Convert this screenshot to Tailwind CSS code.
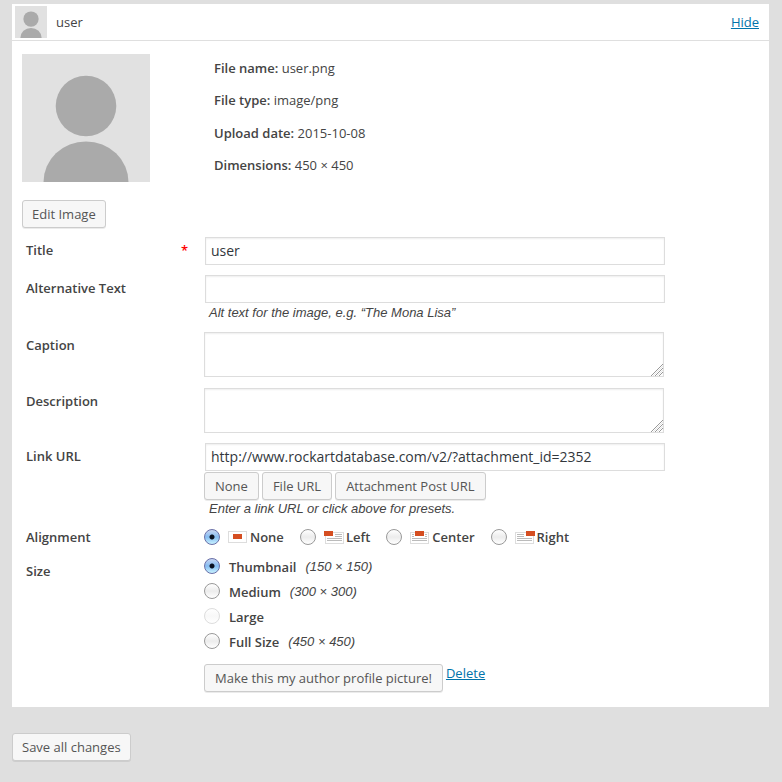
<!DOCTYPE html>
<html lang="en">
<head>
<meta charset="utf-8">
<meta name="viewport" content="width=device-width, initial-scale=1">
<title>Media upload</title>
<script src="https://cdn.jsdelivr.net/npm/@tailwindcss/browser@4"></script>
</head>
<body class="min-h-screen bg-[#dfdfdf] pt-1 pl-3 pr-[13px] pb-5 font-['Open_Sans','Noto_Sans',sans-serif] text-[13px] leading-[18px] text-[#444]">
<form>
  <main class="bg-white pb-[15px]">
    <header class="flex h-[37px] items-center border-b border-[#dfdfdf] pl-[3px] pr-[10px]">
      <svg class="size-8 shrink-0" viewBox="0 0 128 128" aria-hidden="true"><rect width="128" height="128" fill="#e1e1e1"/><circle cx="64" cy="52" r="30.500" fill="#aaa"/><path d="M21.500 128a42.500 40.500 0 0 1 85 0z" fill="#aaa"/></svg>
      <span class="ml-[9px] grow">user</span>
      <a href="#" class="text-[#0073aa] underline">Hide</a>
    </header>

    <section class="px-[10px] pt-[13px]">
      <div class="flex">
        <svg class="size-32 shrink-0" viewBox="0 0 128 128" role="img" aria-label="user"><rect width="128" height="128" fill="#e1e1e1"/><circle cx="64" cy="52" r="30.300" fill="#aaa"/><path d="M21.500 128a42.500 40.500 0 0 1 85 0z" fill="#aaa"/></svg>
        <div class="ml-16 flex flex-col justify-between pt-[5px] pb-2">
          <p><strong class="font-semibold">File name:</strong> user.png</p>
          <p><strong class="font-semibold">File type:</strong> image/png</p>
          <p><strong class="font-semibold">Upload date:</strong> 2015-10-08</p>
          <p><strong class="font-semibold">Dimensions:</strong> 450 × 450</p>
        </div>
      </div>
      <button type="button" class="mt-[18px] block h-7 rounded-[3px] border border-[#ccc] bg-[#f7f7f7] px-[9px] text-[#555] shadow-[0_1px_0_rgba(0,0,0,0.08)]">Edit Image</button>
    </section>

    <section class="mt-[9px] flex flex-col gap-[10px] pl-[14px] pr-[104px]">
      <div class="flex items-start">
        <label for="title" class="flex w-[178px] shrink-0 justify-between pr-4 pt-1 font-semibold">Title <span class="text-[#f00]">*</span></label>
        <div class="grow pl-px">
          <input id="title" type="text" value="user" required class="block h-7 w-full border border-[#ddd] bg-white px-[5px] pb-px text-sm text-[#32373c] shadow-[inset_0_1px_2px_rgba(0,0,0,0.07)]">
        </div>
      </div>

      <div class="flex items-start">
        <label for="alt" class="w-[178px] shrink-0 pt-1 font-semibold">Alternative Text</label>
        <div class="grow pl-px">
          <input id="alt" type="text" class="block h-7 w-full border border-[#ddd] bg-white px-[5px] text-sm shadow-[inset_0_1px_2px_rgba(0,0,0,0.07)]">
          <p class="pt-px pl-1 font-['Liberation_Sans',sans-serif] italic">Alt text for the image, e.g. “The Mona Lisa”</p>
        </div>
      </div>

      <div class="flex items-start pb-px">
        <label for="caption" class="w-[178px] shrink-0 pt-1 font-semibold">Caption</label>
        <div class="relative mr-px grow">
          <textarea id="caption" class="block h-[45px] w-full resize-none border border-[#ddd] bg-white px-[5px] text-sm shadow-[inset_0_1px_2px_rgba(0,0,0,0.07)]"></textarea>
          <svg class="pointer-events-none absolute right-px bottom-px size-3" viewBox="0 0 12 12" fill="none" stroke="#999" aria-hidden="true"><path d="M0 12 12 0M4 12l8-8M8 12l4-4"/><path d="M2 12l10-10M6 12l6-6" stroke="#e4e4e4"/></svg>
        </div>
      </div>

      <div class="flex items-start">
        <label for="description" class="w-[178px] shrink-0 pt-1 font-semibold">Description</label>
        <div class="relative mr-px grow">
          <textarea id="description" class="block h-[45px] w-full resize-none border border-[#ddd] bg-white px-[5px] text-sm shadow-[inset_0_1px_2px_rgba(0,0,0,0.07)]"></textarea>
          <svg class="pointer-events-none absolute right-px bottom-px size-3" viewBox="0 0 12 12" fill="none" stroke="#999" aria-hidden="true"><path d="M0 12 12 0M4 12l8-8M8 12l4-4"/><path d="M2 12l10-10M6 12l6-6" stroke="#e4e4e4"/></svg>
        </div>
      </div>

      <div class="flex items-start">
        <label for="url" class="w-[178px] shrink-0 pt-1 font-semibold">Link URL</label>
        <div class="grow">
          <div class="pl-px"><input id="url" type="text" value="http://www.rockartdatabase.com/v2/?attachment_id=2352" class="block h-7 w-full border border-[#ddd] bg-white px-[5px] pb-px text-sm text-[#32373c] shadow-[inset_0_1px_2px_rgba(0,0,0,0.07)]"></div>
          <div class="flex gap-[3px] pt-px">
            <button type="button" class="h-7 rounded-[3px] border border-[#ccc] bg-[#f7f7f7] px-[10px] text-[#555] shadow-[0_1px_0_rgba(0,0,0,0.08)]">None</button>
            <button type="button" class="h-7 rounded-[3px] border border-[#ccc] bg-[#f7f7f7] px-[10px] text-[#555] shadow-[0_1px_0_rgba(0,0,0,0.08)]">File URL</button>
            <button type="button" class="h-7 rounded-[3px] border border-[#ccc] bg-[#f7f7f7] px-[10px] text-[#555] shadow-[0_1px_0_rgba(0,0,0,0.08)]">Attachment Post URL</button>
          </div>
          <p class="pl-[5px] font-['Liberation_Sans',sans-serif] italic">Enter a link URL or click above for presets.</p>
        </div>
      </div>

      <fieldset class="flex h-4 items-center">
        <legend class="float-left w-[178px] shrink-0 font-semibold">Alignment</legend>
        <div class="flex items-center gap-4">
          <label class="flex items-center font-semibold"><input type="radio" name="align" checked class="mr-2 size-4 shrink-0 appearance-none rounded-full border border-[#999] bg-linear-to-b from-white via-[#ececec] to-white checked:border-[#6a70a8] checked:bg-[radial-gradient(circle_at_50%_50%,#0a1020_2px,transparent_3px),linear-gradient(#c9d6f2,#86bdf2_50%,#c8f2ff)]"><svg class="mr-[3px] h-[14px] w-[19px]" viewBox="0 0 19 14" aria-hidden="true"><rect x=".5" y="1.500" width="18" height="11" fill="#fff" stroke="#ddd"/><rect x="5" y="4" width="9" height="5" fill="#d54e21"/></svg>None</label>
          <label class="flex items-center font-semibold"><input type="radio" name="align" class="mr-2 size-4 shrink-0 appearance-none rounded-full border border-[#999] bg-linear-to-b from-white via-[#ececec] to-white checked:border-[#6a70a8] checked:bg-[radial-gradient(circle_at_50%_50%,#0a1020_2px,transparent_3px),linear-gradient(#c9d6f2,#86bdf2_50%,#c8f2ff)]"><svg class="mr-[2px] h-[14px] w-5" viewBox="0 0 20 14" aria-hidden="true"><rect x="1.500" y="2.500" width="18" height="11" fill="#fff" stroke="#ddd"/><path d="M11 4.500h7M11 6.500h7M3 8.500h15M3 10.500h15" stroke="#bbb"/><rect y="1" width="9" height="5" fill="#d54e21"/></svg>Left</label>
          <label class="flex items-center font-semibold"><input type="radio" name="align" class="mr-2 size-4 shrink-0 appearance-none rounded-full border border-[#999] bg-linear-to-b from-white via-[#ececec] to-white checked:border-[#6a70a8] checked:bg-[radial-gradient(circle_at_50%_50%,#0a1020_2px,transparent_3px),linear-gradient(#c9d6f2,#86bdf2_50%,#c8f2ff)]"><svg class="mr-[3px] h-[14px] w-[19px]" viewBox="0 0 19 14" aria-hidden="true"><rect x=".5" y="2.500" width="18" height="11" fill="#fff" stroke="#ddd"/><path d="M2 4.500h2M15 4.500h2M2 6.500h2M15 6.500h2M2 8.500h15M2 10.500h15" stroke="#bbb"/><rect x="5" y="1" width="9" height="5" fill="#d54e21"/></svg>Center</label>
          <label class="flex items-center font-semibold"><input type="radio" name="align" class="mr-2 size-4 shrink-0 appearance-none rounded-full border border-[#999] bg-linear-to-b from-white via-[#ececec] to-white checked:border-[#6a70a8] checked:bg-[radial-gradient(circle_at_50%_50%,#0a1020_2px,transparent_3px),linear-gradient(#c9d6f2,#86bdf2_50%,#c8f2ff)]"><svg class="mr-[2px] h-[14px] w-5" viewBox="0 0 20 14" aria-hidden="true"><rect x=".5" y="2.500" width="18" height="11" fill="#fff" stroke="#ddd"/><path d="M2 4.500h7M2 6.500h7M2 8.500h15M2 10.500h15" stroke="#bbb"/><rect x="11" y="1" width="9" height="5" fill="#d54e21"/></svg>Right</label>
        </div>
      </fieldset>

      <fieldset class="flex items-start">
        <legend class="float-left w-[178px] shrink-0 pt-2 font-semibold">Size</legend>
        <div class="flex flex-col">
          <label class="flex h-[25px] items-center"><input type="radio" name="size" checked class="mr-[9px] mb-0.5 size-4 shrink-0 appearance-none rounded-full border border-[#999] bg-linear-to-b from-white via-[#ececec] to-white checked:border-[#6a70a8] checked:bg-[radial-gradient(circle_at_50%_50%,#0a1020_2px,transparent_3px),linear-gradient(#c9d6f2,#86bdf2_50%,#c8f2ff)]"><b class="font-semibold">Thumbnail</b><i class="ml-[9px] font-['Liberation_Sans',sans-serif]">(150 × 150)</i></label>
          <label class="flex h-[25px] items-center"><input type="radio" name="size" class="mr-[9px] mb-0.5 size-4 shrink-0 appearance-none rounded-full border border-[#999] bg-linear-to-b from-white via-[#ececec] to-white checked:border-[#6a70a8] checked:bg-[radial-gradient(circle_at_50%_50%,#0a1020_2px,transparent_3px),linear-gradient(#c9d6f2,#86bdf2_50%,#c8f2ff)]"><b class="font-semibold">Medium</b><i class="ml-[9px] font-['Liberation_Sans',sans-serif]">(300 × 300)</i></label>
          <label class="flex h-[25px] items-center"><input type="radio" name="size" disabled class="mr-[9px] mb-0.5 size-4 shrink-0 appearance-none rounded-full border border-[#ddd] bg-linear-to-b from-white via-[#f8f8f8] to-white"><b class="font-semibold">Large</b></label>
          <label class="flex h-[25px] items-center"><input type="radio" name="size" class="mr-[9px] mb-0.5 size-4 shrink-0 appearance-none rounded-full border border-[#999] bg-linear-to-b from-white via-[#ececec] to-white checked:border-[#6a70a8] checked:bg-[radial-gradient(circle_at_50%_50%,#0a1020_2px,transparent_3px),linear-gradient(#c9d6f2,#86bdf2_50%,#c8f2ff)]"><b class="font-semibold">Full Size</b><i class="ml-[9px] font-['Liberation_Sans',sans-serif]">(450 × 450)</i></label>
        </div>
      </fieldset>

      <div class="flex items-start gap-[3px] pl-[178px]">
        <button type="button" class="h-7 rounded-[3px] border border-[#ccc] bg-[#f7f7f7] px-[10px] text-[#555] shadow-[0_1px_0_rgba(0,0,0,0.08)]">Make this my author profile picture!</button>
        <a href="#" class="text-[#0073aa] underline">Delete</a>
      </div>
    </section>
  </main>
  <button type="submit" class="mt-[26px] h-7 rounded-[3px] border border-[#ccc] bg-[#f7f7f7] px-[9px] text-[#555] shadow-[0_1px_0_rgba(0,0,0,0.08)]">Save all changes</button>
</form>
</body>
</html>
